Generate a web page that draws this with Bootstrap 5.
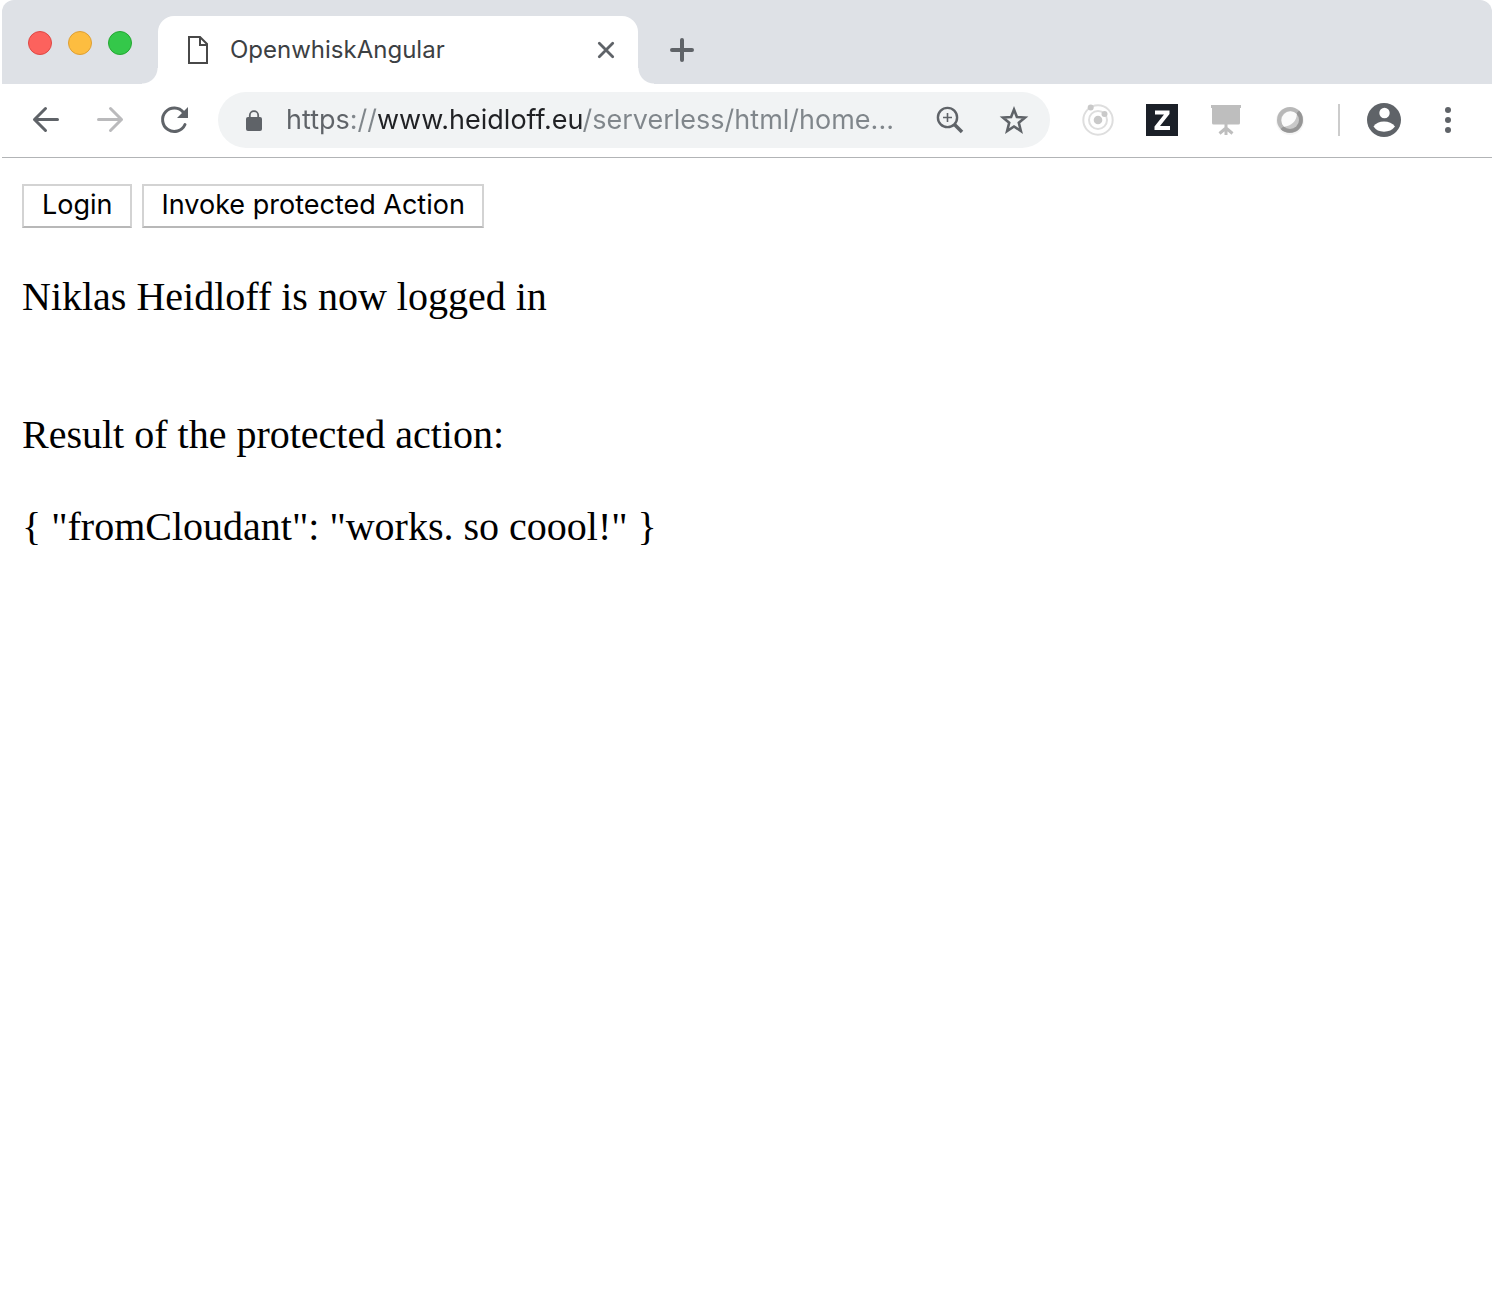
<!DOCTYPE html>
<html lang="en">
<head>
<meta charset="utf-8">
<meta name="viewport" content="width=device-width, initial-scale=1">
<title>OpenwhiskAngular</title>
<link href="https://cdn.jsdelivr.net/npm/bootstrap@5.3.0/dist/css/bootstrap.min.css" rel="stylesheet">
<style>
  :root { --strip: #dee1e6; --ink: #5f6368; --soft: #80868b; }
  body { font-family: Inter, sans-serif; color: #000; background: #fff; }
  svg { display: block; flex: none; }
  .window-frame { padding-left: 2px; }
  .tab-strip { height: 84px; padding-top: 16px; background: var(--strip); border-radius: 12px 12px 0 0; }
  .lights { width: 156px; gap: 16px; padding: 15px 0 0 26px; }
  .light { width: 24px; height: 24px; border-radius: 50%; border: 1px solid; padding: 0; }
  .light-close { background: #fc625d; border-color: #df4744; }
  .light-min { background: #fdbd40; border-color: #de9f34; }
  .light-max { background: #34c84a; border-color: #24a732; }
  .page-tab { width: 480px; padding: 0 20px; background: #fff; border-radius: 16px 16px 0 0; color: #3c4043; font-size: 24px; }
  .page-tab::before, .page-tab::after { content: ""; position: absolute; bottom: 0; width: 16px; height: 16px; }
  .page-tab::before { left: -16px; background: radial-gradient(circle at 0 0, transparent 15px, #fff 16px); }
  .page-tab::after { right: -16px; background: radial-gradient(circle at 100% 0, transparent 15px, #fff 16px); }
  .tab-name { color: inherit; margin-left: 12px; }
  .icon-btn { width: 64px; height: 56px; padding: 0; border: 0; background: none; display: flex; align-items: center; justify-content: center; flex: none; }
  .slim-btn { width: 24px; height: 40px; }
  .new-tab { width: 40px; height: 68px; margin-left: 24px; }
  .toolbar { padding: 8px 12px 9px; border-bottom: 1px solid #b2b4b6; }
  .omnibox { height: 56px; margin: 0 16px 0 12px; padding: 0 4px 0 16px; border-radius: 28px; background: #f1f3f4; }
  .url { min-width: 0; margin-left: 12px; padding: 0; border: 0; outline: 0; font-size: 27px; color: var(--soft);
    background: linear-gradient(90deg, var(--ink) 64px, var(--soft) 64px, var(--soft) 91px, #202124 91px, #202124 297px, var(--soft) 297px);
    -webkit-background-clip: text; background-clip: text; -webkit-text-fill-color: transparent; }
  .divider { width: 2px; height: 32px; background: #ccc; margin: 0 12px 0 16px; }
  .app { padding: 26px 20px; font-family: "Liberation Serif", serif; font-size: 40px; line-height: 46px; }
  .app p { margin: 0 0 46px; }
  .app .status { margin: 46px 0 92px; }
  .actions { gap: 10px; }
  .plain-btn { height: 44px; padding: 0 17px 2px 18px; border: 2px solid #d3d3d3; border-bottom-color: #b8b8b8; background: #fff; color: #000; font: 27px/38px Inter, sans-serif; }
</style>
</head>
<body>
<div class="window-frame">
  <header>
    <div class="tab-strip d-flex">
      <div class="lights d-flex align-items-start">
        <button class="light light-close" aria-label="Close window"></button>
        <button class="light light-min" aria-label="Minimize"></button>
        <button class="light light-max" aria-label="Maximize"></button>
      </div>
      <div class="page-tab position-relative d-flex align-items-center">
        <svg width="40" height="40" viewBox="0 0 40 40" fill="none" stroke="#484848" stroke-width="2"><path d="M11 7H22L29 14V33H11ZM22 7V15H29"/></svg>
        <a class="tab-name text-decoration-none flex-grow-1" href="#">OpenwhiskAngular</a>
        <button class="icon-btn slim-btn" aria-label="Close tab"><svg width="24" height="24" viewBox="0 0 24 24" fill="none" stroke="#5f6368" stroke-width="2.8" stroke-linecap="round"><path d="M5.3 5.3 18.7 18.7M18.7 5.3 5.3 18.7"/></svg></button>
      </div>
      <button class="icon-btn new-tab" aria-label="New tab"><svg width="32" height="32" viewBox="0 0 32 32" fill="none" stroke="#5f6368" stroke-width="4" stroke-linecap="round"><path d="M6 16H26M16 6V26"/></svg></button>
    </div>
    <nav class="toolbar d-flex align-items-center" aria-label="Browser toolbar">
      <button class="icon-btn" aria-label="Back"><svg width="40" height="40" viewBox="0 0 40 40" fill="none" stroke="#5f6368" stroke-width="3" stroke-linecap="round" stroke-linejoin="round"><path d="M31.5 19.5H8.5M19.5 8.5 8.5 19.5 19.5 30.5"/></svg></button>
      <button class="icon-btn" aria-label="Forward"><svg width="40" height="40" viewBox="0 0 40 40" fill="none" stroke="#bababc" stroke-width="3" stroke-linecap="round" stroke-linejoin="round"><path d="M8.5 19.5H31.5M20.5 8.5 31.5 19.5 20.5 30.5"/></svg></button>
      <button class="icon-btn" aria-label="Reload"><svg width="40" height="40" viewBox="0 0 40 40"><path d="M29.5 12.5A11.7 11.7 0 1 0 31 24.5" fill="none" stroke="#5f6368" stroke-width="3" stroke-linecap="round"/><path d="M34 7V18H23Z" fill="#5f6368"/></svg></button>
      <div class="omnibox d-flex align-items-center flex-grow-1">
        <svg width="40" height="40" viewBox="0 0 40 40"><rect x="12" y="17" width="16" height="14" rx="2" fill="#5f6368"/><path d="M15.8 18V15.3A4.2 4.2 0 0 1 24.2 15.3V18" fill="none" stroke="#5f6368" stroke-width="1.8"/></svg>
        <input class="url flex-grow-1" type="text" aria-label="Address" value="https://www.heidloff.eu/serverless/html/home...">
        <button class="icon-btn" aria-label="Zoom"><svg width="40" height="40" viewBox="0 0 40 40" fill="none" stroke="#5f6368"><circle cx="17.5" cy="17.5" r="9.6" stroke-width="2.4"/><path d="M17.5 13V22M13 17.5H22" stroke-width="1.6"/><path d="M24.500 24.500 32 32" stroke-width="3.6"/></svg></button>
        <button class="icon-btn" aria-label="Bookmark"><svg width="40" height="40" viewBox="0 0 40 40"><path d="M20 9.5 22.9 17 31 17.5 24.8 22.7 26.9 31 20 26.5 13.1 31 15.2 22.7 9 17.5 17.1 17Z" fill="none" stroke="#5f6368" stroke-width="2.6"/></svg></button>
      </div>
      <button class="icon-btn" aria-label="Orbit extension"><svg width="40" height="40" viewBox="0 0 40 40"><g fill="none" stroke="#dedede" stroke-width="2"><circle cx="20" cy="20" r="14.7"/><circle cx="20" cy="20" r="9"/></g><g fill="#c9c9c9"><circle cx="20" cy="20" r="4.3"/><circle cx="12.7" cy="7.5" r="3"/><circle cx="26.5" cy="14" r="3"/></g></svg></button>
      <button class="icon-btn" aria-label="Z extension"><svg width="32" height="32" viewBox="0 0 32 32"><path fill="#1b2028" d="M0 0H32V32H0Z"/><path d="M9 6.500H23.500V10L14 22H24V26H8.500V22.500L18 10.500H9Z" fill="#fff"/></svg></button>
      <button class="icon-btn" aria-label="Presentation extension"><svg width="40" height="40" viewBox="0 0 40 40" fill="#bebebe"><path d="M5 5H35V8H34V23Q34 24.5 32.5 24.5H7.500Q6 24.5 6 23V8H5Z"/><path d="M20 24V35M20 28 13.500 33.5M20 28 26.500 33.5" stroke="#bebebe" stroke-width="3"/></svg></button>
      <button class="icon-btn" aria-label="Sphere extension"><svg width="40" height="40" viewBox="0 0 40 40"><circle cx="20" cy="21" r="14" fill="#f5f5f5"/><circle cx="20" cy="20" r="13" fill="#b8b8b8"/><path d="M29 10.600A13 13 0 0 1 10.600 29L14 26 26 14Z" fill="#969696"/><circle cx="20" cy="20" r="9" fill="#c8c8c8"/><path d="M26.800 14A9 9 0 1 0 14 26.700C21 26 27 21 26.800 14Z" fill="#fbfbfb"/></svg></button>
      <div class="divider"></div>
      <button class="icon-btn" aria-label="Profile"><svg width="40" height="40" viewBox="0 0 40 40"><circle cx="20" cy="20" r="17" fill="#5f6368"/><g fill="#fff"><circle cx="20.5" cy="13" r="5.2"/><path d="M9.500 26.500Q13 21.500 20 21.500T31 26.500Q27 31.700 20 31.700T9.500 26.500Z"/></g></svg></button>
      <button class="icon-btn" aria-label="Menu"><svg width="40" height="40" viewBox="0 0 40 40" fill="#5f6368"><circle cx="20" cy="10" r="3"/><circle cx="20" cy="20" r="3"/><circle cx="20" cy="30" r="3"/></svg></button>
    </nav>
  </header>
  <main class="app">
    <div class="actions d-flex">
      <button class="plain-btn">Login</button>
      <button class="plain-btn">Invoke protected Action</button>
    </div>
    <p class="status">Niklas Heidloff is now logged in</p>
    <p>Result of the protected action:</p>
    <p>{ "fromCloudant": "works. so coool!" }</p>
  </main>
</div>
<script src="https://cdn.jsdelivr.net/npm/bootstrap@5.3.0/dist/js/bootstrap.bundle.min.js"></script>
</body>
</html>
